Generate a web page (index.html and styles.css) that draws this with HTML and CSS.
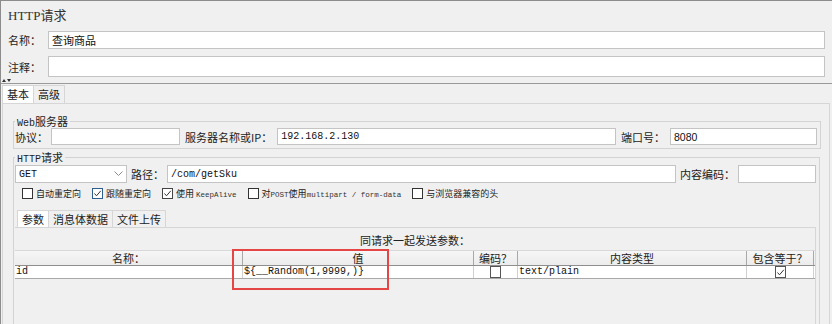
FILE: index.html
```html
<!DOCTYPE html>
<html lang="zh-CN">
<head>
<meta charset="utf-8">
<title>HTTP请求</title>
<link rel="stylesheet" href="styles.css">
</head>
<body>
<div class="app">
  <div class="title">HTTP请求</div>
  <div class="row name-row">
    <span class="lbl">名称：</span>
    <div class="field">查询商品</div>
  </div>
  <div class="row comment-row">
    <span class="lbl">注释：</span>
    <div class="field"></div>
  </div>
  <div class="divider"><span class="arr up"></span><span class="arr down"></span></div>
  <div class="tabs">
    <div class="tab active">基本</div>
    <div class="tab">高级</div>
  </div>
  <div class="tabpanel">
    <fieldset class="group web">
      <legend><span class="lat">Web</span>服务器</legend>
      <div class="frow">
        <span class="lbl2">协议：</span>
        <div class="field w-proto"></div>
        <span class="lbl2 gap">服务器名称或IP：</span>
        <div class="field grow mono">192.168.2.130</div>
        <span class="lbl2 gap">端口号：</span>
        <div class="field w-port sans">8080</div>
      </div>
    </fieldset>
    <fieldset class="group http">
      <legend><span class="lat">HTTP</span>请求</legend>
      <div class="frow r1">
        <div class="field select mono">GET
          <svg class="chev" width="9" height="6" viewBox="0 0 9 6"><polyline points="0.5,0.5 4.5,4.5 8.5,0.5" fill="none" stroke="#8a8a8a" stroke-width="1"/></svg>
        </div>
        <span class="lbl2 gap4">路径：</span>
        <div class="field grow mono">/com/getSku</div>
        <span class="lbl2 gap4">内容编码：</span>
        <div class="field w-enc"></div>
      </div>
      <div class="checks">
        <span class="chk"><span class="cb"></span><span class="txt">自动重定向</span></span>
        <span class="chk"><span class="cb blue"><svg width="9" height="9" viewBox="0 0 9 9"><polyline points="1.5,4.5 3.5,6.8 7.8,1.8" fill="none" stroke="#333" stroke-width="1"/></svg></span><span class="txt">跟随重定向</span></span>
        <span class="chk"><span class="cb grey"><svg width="9" height="9" viewBox="0 0 9 9"><polyline points="1.5,4.5 3.5,6.8 7.8,1.8" fill="none" stroke="#333" stroke-width="1"/></svg></span><span class="txt">使用 <span class="tiny">KeepAlive</span></span></span>
        <span class="chk"><span class="cb"></span><span class="txt">对<span class="tiny">POST</span>使用<span class="tiny">multipart / form-data</span></span></span>
        <span class="chk"><span class="cb"></span><span class="txt">与浏览器兼容的头</span></span>
      </div>
      <div class="subtabs">
        <div class="stab active">参数</div>
        <div class="stab">消息体数据</div>
        <div class="stab">文件上传</div>
      </div>
      <div class="subpanel">
        <div class="caption">同请求一起发送参数：</div>
        <div class="grid head">
          <div class="hc">名称：</div>
          <div class="hc">值</div>
          <div class="hc">编码？</div>
          <div class="hc">内容类型</div>
          <div class="hc">包含等于？</div>
        </div>
        <div class="grid datarow">
          <div class="dc mono">id</div>
          <div class="dc mono">${__Random(1,9999,)}</div>
          <div class="dc center"><span class="cb small"></span></div>
          <div class="dc mono">text/plain</div>
          <div class="dc center"><span class="cb small"><svg width="9" height="9" viewBox="0 0 9 9"><polyline points="1.5,4.5 3.5,6.8 7.8,1.8" fill="none" stroke="#333" stroke-width="1"/></svg></span></div>
        </div>
        <div class="highlight"></div>
      </div>
    </fieldset>
  </div>
</div>
</body>
</html>
```

FILE: styles.css
```css
html, body {
  margin: 0;
  padding: 0;
}
body {
  width: 832px;
  height: 324px;
  overflow: hidden;
  background: #f0f0f0;
  font-family: "Noto Sans CJK SC", "Liberation Sans", sans-serif;
  font-size: 11px;
  color: #222;
}
.app {
  height: 324px;
  box-sizing: border-box;
  border-top: 1px solid #8c8c8c;
  border-left: 1px solid #8c8c8c;
  overflow: hidden;
}
.title {
  height: 24px;
  box-sizing: border-box;
  padding: 6px 0 0 7px;
  font: 13px/18px "Liberation Serif", "Noto Sans CJK SC", serif;
  color: #333;
}
.row {
  display: flex;
  align-items: stretch;
  padding: 0 7px;
}
.name-row { margin-top: 6px; height: 18px; }
.comment-row { margin-top: 7px; height: 21px; }
.lbl {
  width: 40px;
  display: flex;
  align-items: center;
  color: #222;
}
.field {
  flex: 1;
  background: #fff;
  border: 1px solid #c4c4c4;
  box-sizing: border-box;
  display: flex;
  align-items: center;
  padding-left: 3px;
  color: #111;
  white-space: nowrap;
  overflow: hidden;
}
.row .field { flex: 1; }
.divider {
  position: relative;
  height: 6px;
  border-bottom: 1px solid #9a9a9a;
}
.arr {
  position: absolute;
  top: 2px;
  width: 0;
  height: 0;
  border-left: 2px solid transparent;
  border-right: 2px solid transparent;
}
.arr.up { left: 1px; border-bottom: 3px solid #333; }
.arr.down { left: 6px; border-top: 3px solid #333; }
.tabs {
  display: flex;
  margin-top: 1px;
  padding-left: 1px;
  height: 18px;
}
.tab {
  padding: 0 4px;
  border: 1px solid #d6d6d6;
  border-bottom: none;
  line-height: 17px;
  background: #f0f0f0;
}
.tab.active { background: #fff; }
.tab + .tab { border-left: none; }
.tabpanel {
  margin: 0 2px 0 1px;
  height: 230px;
  border: 1px solid #d6d6d6;
  border-bottom: none;
  padding: 10px 8px 0 10px;
}
.group {
  margin: 0;
  padding: 0 3px 3px 1px;
  border: 1px solid #d3d3d3;
  min-width: 0;
}
.group legend {
  display: block;
  height: 14px;
  padding: 0 2px;
  font-size: 11px;
  line-height: 14px;
  color: #222;
  white-space: nowrap;
}
.lat {
  font-family: "Liberation Mono", monospace;
  font-size: 10px;
}
.frow {
  display: flex;
  align-items: stretch;
  height: 17px;
}
.lbl2 {
  display: flex;
  align-items: center;
  white-space: nowrap;
  margin-right: 3px;
}
.lbl2.gap { margin-left: 5px; margin-right: 5px; }
.lbl2.gap4 { margin-left: 4px; margin-right: 3px; }
.field.w-proto { flex: 0 0 129px; }
.field.w-port { flex: 0 0 147px; }
.field.w-enc { flex: 0 0 78px; }
.field.grow { flex: 1; }
.mono {
  font-family: "Liberation Mono", monospace;
  font-size: 10px;
}
.sans {
  font-family: "Liberation Sans", sans-serif;
  font-size: 10.5px;
}
.http { margin-top: 1px; margin-right: 1px; height: 200px; }
.r1 { margin-top: 1px; height: 18px; }
.field.select {
  flex: 0 0 112px;
  justify-content: space-between;
  padding-right: 3px;
}
.chev { display: block; }
.checks {
  display: flex;
  align-items: center;
  height: 15px;
  margin-top: 3px;
  padding-left: 7px;
  font-size: 9px;
  color: #222;
}
.chk {
  display: flex;
  align-items: center;
  margin-right: 11px;
  white-space: nowrap;
}
.txt {
  display: block;
  line-height: 13px;
  height: 13px;
}
.cb {
  width: 11px;
  height: 11px;
  box-sizing: border-box;
  border: 1px solid #333;
  background: #fff;
  margin-right: 3px;
  display: flex;
  align-items: center;
  justify-content: center;
}
.cb.blue { border-color: #2f5f8f; }
.cb.grey { border-color: #444; }
.tiny {
  font-family: "Liberation Mono", monospace;
  font-size: 7.5px;
  color: #333;
}
.subtabs {
  display: flex;
  margin-top: 9px;
  margin-left: 2px;
  height: 17px;
}
.stab {
  padding: 0 4px;
  border: 1px solid #d6d6d6;
  border-bottom: none;
  line-height: 16px;
  background: #f0f0f0;
}
.stab + .stab { border-left: none; }
.stab.active { background: #fff; }
.subpanel {
  position: relative;
  height: 120px;
  border-top: 1px solid #d6d6d6;
  border-right: 1px solid #d6d6d6;
}
.caption {
  margin-top: 5px;
  line-height: 14px;
  text-align: center;
  color: #222;
}
.grid {
  display: grid;
  grid-template-columns: 228px 231px 44px 229px 67px;
}
.head {
  margin-top: 3px;
  height: 16px;
  box-sizing: border-box;
  border-top: 1px solid #d8d8d8;
  border-bottom: 1px solid #8e8e8e;
  background: linear-gradient(#f6f6f6, #ececec);
}
.hc {
  text-align: center;
  line-height: 14px;
  border-right: 1px solid #a8a8a8;
  color: #222;
}
.datarow {
  height: 13px;
  box-sizing: border-box;
  background: #fff;
  border-bottom: 1px solid #a8a8a8;
}
.dc {
  line-height: 12px;
  padding-left: 1px;
  border-right: 1px solid #d0d0d0;
  white-space: nowrap;
  overflow: hidden;
  color: #111;
}
.dc.center {
  display: flex;
  justify-content: center;
  padding-left: 0;
}
.cb.small {
  margin: 0;
  height: 12px;
  border-color: #555;
}
.highlight {
  position: absolute;
  left: 217px;
  top: 21px;
  width: 157px;
  height: 41px;
  box-sizing: border-box;
  border: 2px solid #e64545;
}
```
